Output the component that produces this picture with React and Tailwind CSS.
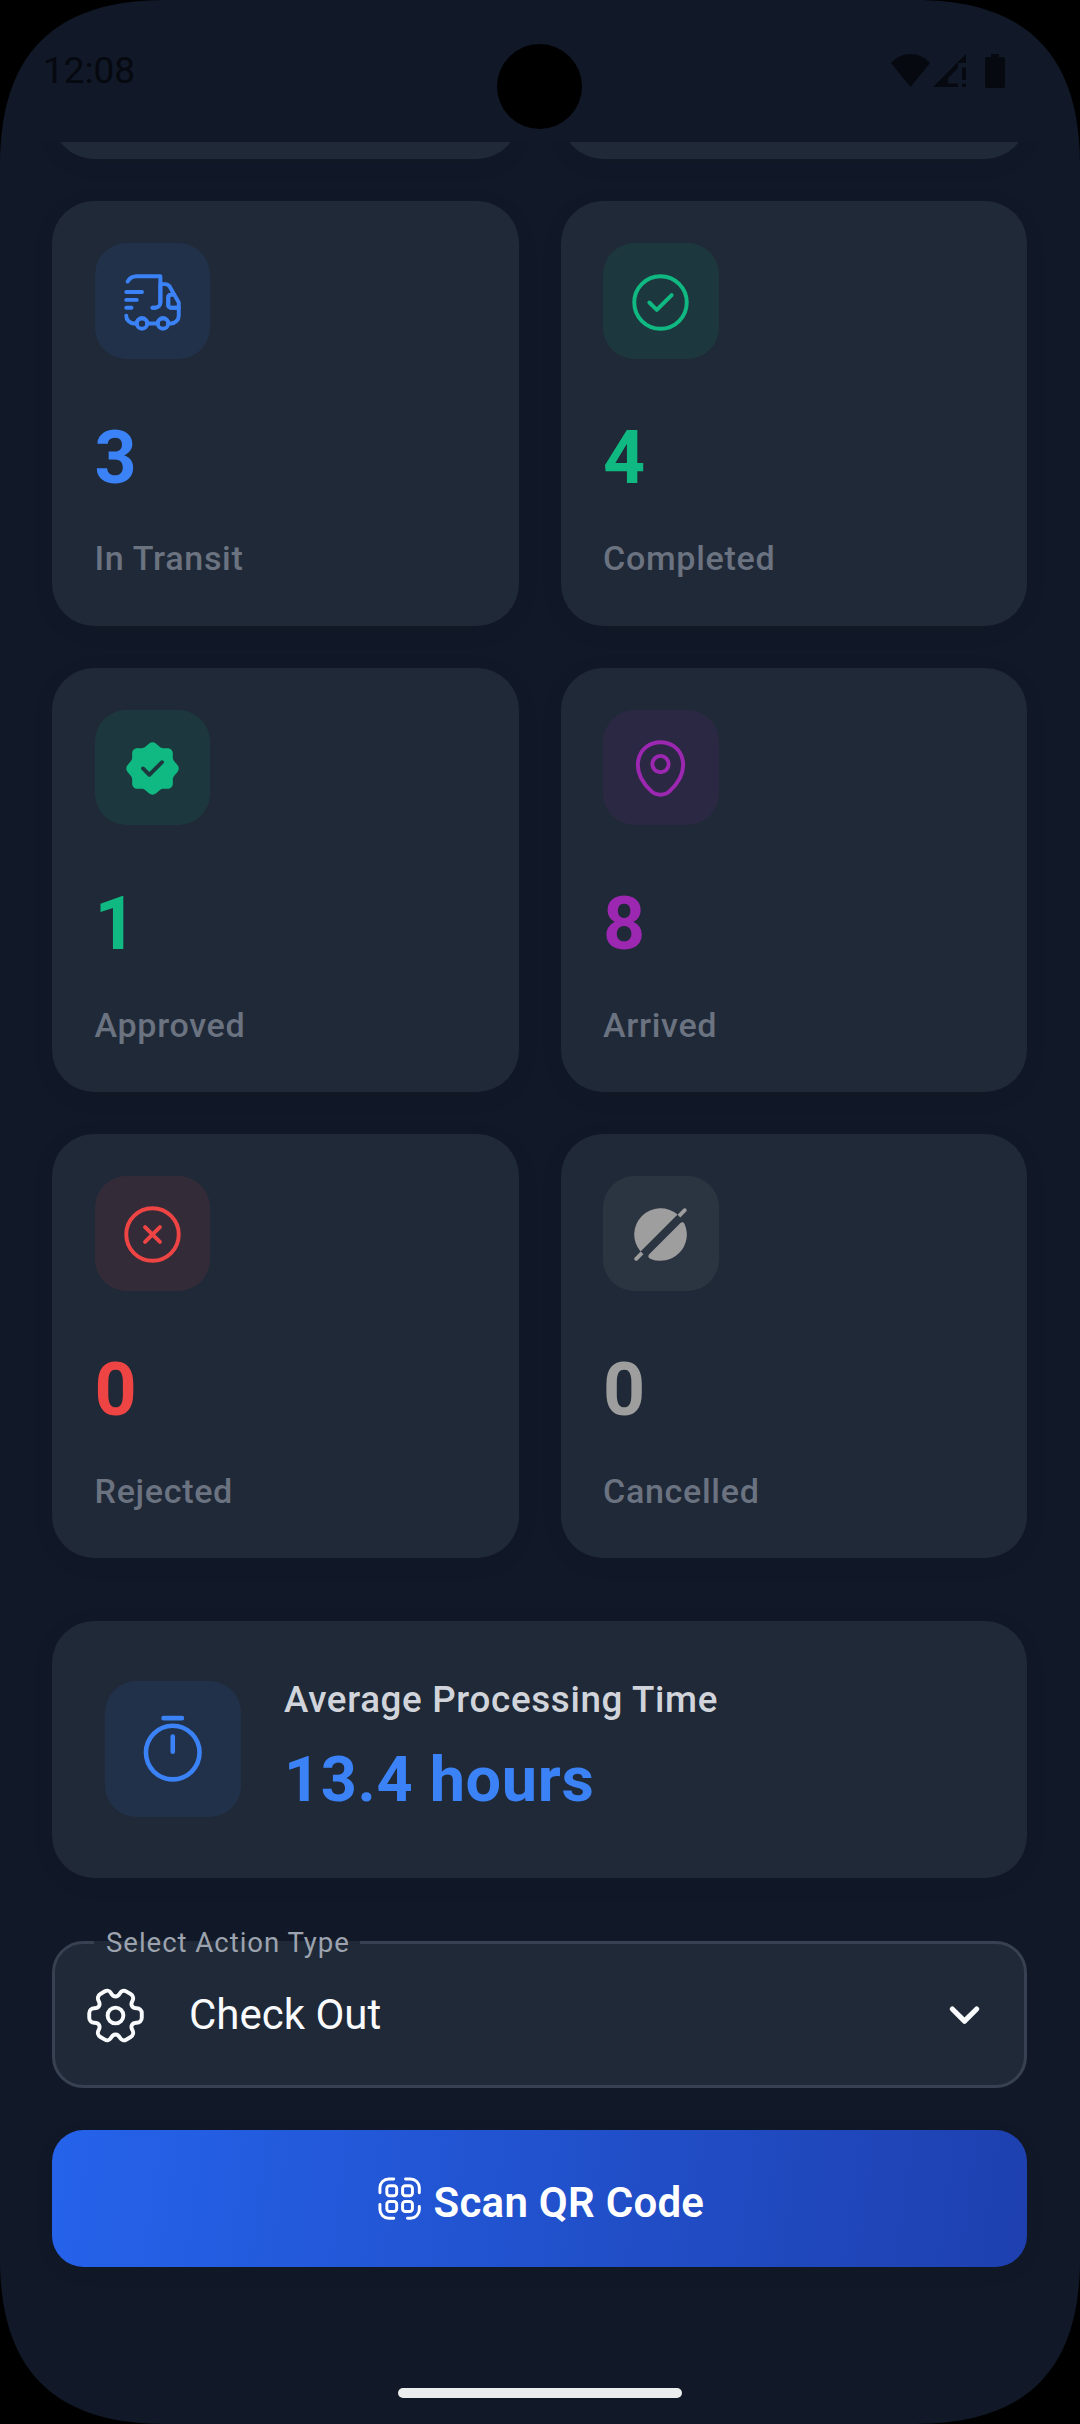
const stroke = {
  fill: "none",
  stroke: "currentColor",
  strokeWidth: 1.5,
  strokeLinecap: "round",
  strokeLinejoin: "round",
};

function Icon({ className, children }) {
  return (
    <svg viewBox="0 0 24 24" className={className} {...stroke}>
      {children}
    </svg>
  );
}

const TruckFast = () => (
  <>
    <path d="M12 14h1c1.1 0 2-.9 2-2V2H6c-1.5 0-2.81.83-3.49 2.05" />
    <path d="M2 17c0 1.66 1.34 3 3 3h1c0-1.1.9-2 2-2s2 .9 2 2h4c0-1.1.9-2 2-2s2 .9 2 2h1c1.66 0 3-1.34 3-3v-3h-3c-.55 0-1-.45-1-1v-3c0-.55.45-1 1-1h1.29l-1.71-2.99A2.016 2.016 0 0 0 16.84 5H15v7c0 1.1-.9 2-2 2h-1" />
    <circle cx="8" cy="20" r="2" />
    <circle cx="16" cy="20" r="2" />
    <path d="M22 12v2h-3c-.55 0-1-.45-1-1v-3c0-.55.45-1 1-1h1.29L22 12zM2 8h6M2 11h4M2 14h2" />
  </>
);

const TickCircle = () => (
  <>
    <circle cx="12" cy="12" r="10" />
    <path d="M7.75 12l2.83 2.83 5.67-5.66" />
  </>
);

const CloseCircle = () => (
  <>
    <circle cx="12" cy="12" r="10" />
    <path d="M9.17 14.83l5.66-5.66M14.83 14.83L9.17 9.17" />
  </>
);

const Verify = () => (
  <path
    stroke="none"
    fill="currentColor"
    d="M21.5609 10.7386L20.2009 9.15859C19.9409 8.85859 19.7309 8.29859 19.7309 7.89859V6.19859C19.7309 5.13859 18.8609 4.26859 17.8009 4.26859H16.1009C15.7109 4.26859 15.1409 4.05859 14.8409 3.79859L13.2609 2.43859C12.5709 1.84859 11.4409 1.84859 10.7409 2.43859L9.17086 3.80859C8.87086 4.05859 8.30086 4.26859 7.91086 4.26859H6.18086C5.12086 4.26859 4.25086 5.13859 4.25086 6.19859V7.90859C4.25086 8.29859 4.04086 8.85859 3.79086 9.15859L2.44086 10.7486C1.86086 11.4386 1.86086 12.5586 2.44086 13.2486L3.79086 14.8386C4.04086 15.1386 4.25086 15.6986 4.25086 16.0886V17.7986C4.25086 18.8586 5.12086 19.7286 6.18086 19.7286H7.91086C8.30086 19.7286 8.87086 19.9386 9.17086 20.1986L10.7509 21.5586C11.4409 22.1486 12.5709 22.1486 13.2709 21.5586L14.8509 20.1986C15.1509 19.9386 15.7109 19.7286 16.1109 19.7286H17.8109C18.8709 19.7286 19.7409 18.8586 19.7409 17.7986V16.0986C19.7409 15.7086 19.9509 15.1386 20.2109 14.8386L21.5709 13.2586C22.1509 12.5686 22.1509 11.4286 21.5609 10.7386ZM16.1609 10.1086L11.3309 14.9386C11.1909 15.0786 11.0009 15.1586 10.8009 15.1586C10.6009 15.1586 10.4109 15.0786 10.2709 14.9386L7.85086 12.5186C7.56086 12.2286 7.56086 11.7486 7.85086 11.4586C8.14086 11.1686 8.62086 11.1686 8.91086 11.4586L10.8009 13.3486L15.1009 9.04859C15.3909 8.75859 15.8709 8.75859 16.1609 9.04859C16.4509 9.33859 16.4509 9.81859 16.1609 10.1086Z"
  />
);

const Location = () => (
  <>
    <circle cx="12" cy="10.31" r="3.12" />
    <path d="M3.62 8.49c1.97-8.66 14.8-8.65 16.76.01 1.15 5.08-2.01 9.38-4.78 12.04a5.193 5.193 0 0 1-7.21 0c-2.76-2.66-5.92-6.97-4.77-12.05z" />
  </>
);

const Slash = () => (
  <g stroke="none" fill="currentColor">
    <path d="M18.5 4.4A10 10 0 0 0 4.4 18.5Z" />
    <path d="M19.5 7.7C20 7.2 20.9 7.2 21.2 8.05A10 10 0 0 1 8.05 21.2C7.2 20.9 7.2 20 7.7 19.5Z" />
    <path d="M21.78 3.28L19.55 5.5L18.5 4.45L20.72 2.22C21.4 1.55 22.45 2.6 21.78 3.28Z" />
    <path d="M5.5 19.55L3.28 21.78C2.6 22.45 1.55 21.4 2.22 20.72L4.45 18.5Z" />
  </g>
);

const Timer = () => (
  <path d="M20.75 13.25c0 4.83-3.92 8.75-8.75 8.75s-8.75-3.92-8.75-8.75S7.17 4.5 12 4.5s8.75 3.92 8.75 8.75zM12 8v5M9 2h6" />
);

const Setting = () => (
  <>
    <circle cx="12" cy="12" r="3" />
    <path d="M2 12.88v-1.76c0-1.04.85-1.9 1.9-1.9 1.81 0 2.55-1.28 1.64-2.85-.52-.9-.21-2.07.7-2.59l1.73-.99c.79-.47 1.81-.19 2.28.6l.11.19c.9 1.57 2.38 1.57 3.29 0l.11-.19c.47-.79 1.49-1.07 2.28-.6l1.73.99c.91.52 1.22 1.69.7 2.59-.91 1.57-.17 2.85 1.64 2.85 1.04 0 1.9.85 1.9 1.9v1.76c0 1.04-.85 1.9-1.9 1.9-1.81 0-2.55 1.28-1.64 2.85.52.91.21 2.07-.7 2.59l-1.73.99c-.79.47-1.81.19-2.28-.6l-.11-.19c-.9-1.57-2.38-1.57-3.29 0l-.11.19c-.47.79-1.49 1.07-2.28.6l-1.73-.99a1.899 1.899 0 0 1-.7-2.59c.91-1.57.17-2.85-1.64-2.85-1.05 0-1.9-.86-1.9-1.9z" />
  </>
);

const ScanCode = () => (
  <>
    <path d="M2 9V6.5C2 4.01 4.01 2 6.5 2H9M15 2h2.5C19.99 2 22 4.01 22 6.5V9M22 16v1.5c0 2.49-2.01 4.5-4.5 4.5H16M9 22H6.5C4.01 22 2 19.99 2 17.5V15" />
    <rect x="5.5" y="5.5" width="5" height="5" rx="1.4" />
    <rect x="13.5" y="5.5" width="5" height="5" rx="1.4" />
    <rect x="5.5" y="13.5" width="5" height="5" rx="1.4" />
    <rect x="13.5" y="13.5" width="5" height="5" rx="1.4" />
  </>
);

const stats = [
  { label: "In Transit", value: 3, icon: TruckFast, color: "text-[#3b82f6]", tint: "bg-[#3b82f6]/10" },
  { label: "Completed", value: 4, icon: TickCircle, color: "text-[#10b981]", tint: "bg-[#10b981]/10" },
  { label: "Approved", value: 1, icon: Verify, color: "text-[#10b981]", tint: "bg-[#10b981]/10" },
  { label: "Arrived", value: 8, icon: Location, color: "text-[#9c27b0]", tint: "bg-[#9c27b0]/10" },
  { label: "Rejected", value: 0, icon: CloseCircle, color: "text-[#ef4444]", tint: "bg-[#ef4444]/10" },
  { label: "Cancelled", value: 0, icon: Slash, color: "text-[#9e9e9e]", tint: "bg-[#9e9e9e]/10" },
];

function StatCard({ label, value, icon: Glyph, color, tint }) {
  return (
    <div className="h-[424.3px] rounded-[42px] bg-[#1f2937] px-[42.5px] pt-[42px] shadow-[0_5px_26px_rgba(0,0,0,0.05)]">
      <div className={`flex size-[115.5px] items-center justify-center rounded-[31.5px] ${tint} ${color}`}>
        <Icon className="mt-[2px] size-[63px]">
          <Glyph />
        </Icon>
      </div>
      <div className={`mt-[55px] text-[73.5px] leading-[88px] font-bold ${color}`}>{value}</div>
      <div className="mt-[36.7px] text-[34.125px] leading-[40px] font-medium tracking-[0.66px] text-[#6b7280]">{label}</div>
    </div>
  );
}

function StatusBar() {
  return (
    <header className="relative flex h-[142px] shrink-0 items-start justify-between pr-[75px] pl-[43px] text-[#06090f]">
      <span className="mt-[49px] text-[37px] leading-[44px]">12:08</span>
      <div className="absolute top-[44px] left-[497px] size-[85px] rounded-full bg-black" />
      <div className="mt-[54px] flex">
        <svg width="39" height="33" viewBox="0 0 39 33" fill="currentColor">
          <path d="M0 9C11-3 28-3 39 9L19.5 33Z" />
        </svg>
        <svg className="ml-[3px]" width="33" height="33" viewBox="0 0 33 33" fill="currentColor">
          <path d="M33 0V9H24ZM25 9V14L15 24V29.5H25V33H0L24 9ZM29 13.5H33V26H29ZM29 29.5H33V33H29Z" />
        </svg>
        <svg className="ml-[19px]" width="20" height="34" viewBox="0 0 20 34" fill="currentColor">
          <path d="M6 0H14V3H18Q20 3 20 5V32Q20 34 18 34H2Q0 34 0 32V5Q0 3 2 3H6Z" />
        </svg>
      </div>
    </header>
  );
}

export default function App() {
  return (
    <div className="h-[2424px] w-[1080px] overflow-hidden bg-black font-[Roboto,sans-serif]">
      <div className="flex h-full flex-col overflow-hidden bg-[#111827] [clip-path:path('M0_165C0_54_54_0_165_0H915C1026_0_1080_54_1080_165V2259C1080_2370_1026_2424_915_2424H165C54_2424_0_2370_0_2259Z')]">
        <StatusBar />
        <main className="flex flex-1 flex-col overflow-hidden pr-[53px] pl-[52px]">
          <div className="grid shrink-0 grid-cols-2 gap-[42px]">
            <div className="-mt-[43px] h-[60.3px] rounded-b-[42px] bg-[#1f2937] shadow-[0_5px_26px_rgba(0,0,0,0.05)]" />
            <div className="-mt-[43px] h-[60.3px] rounded-b-[42px] bg-[#1f2937] shadow-[0_5px_26px_rgba(0,0,0,0.05)]" />
            {stats.map((s) => (
              <StatCard key={s.label} {...s} />
            ))}
          </div>

          <section className="mt-[62.5px] flex h-[257px] shrink-0 items-center rounded-[42px] bg-[#1f2937] px-[52.5px] shadow-[0_5px_26px_rgba(0,0,0,0.05)]">
            <div className="flex size-[136.5px] items-center justify-center rounded-[31.5px] bg-[#3b82f6]/10 text-[#3b82f6]">
              <Icon className="size-[73.5px]">
                <Timer />
              </Icon>
            </div>
            <div className="ml-[43px] pb-[2.5px]">
              <div className="text-[36.75px] leading-[43px] font-medium tracking-[0.66px] text-[#d1d5db]">Average Processing Time</div>
              <div className="mt-[21px] text-[63px] leading-[75px] font-bold tracking-[0.66px] text-[#3b82f6]">13.4 hours</div>
            </div>
          </section>

          <div className="relative mt-[63px] h-[147px] shrink-0 rounded-[31.5px] border-3 border-[#374151] bg-[#1f2937]">
            <span className="absolute -top-[3px] left-[39px] flex h-[4px] w-[266px] items-center bg-[#1f2937] pl-[12px] text-[27.56px] tracking-[0.97px] whitespace-nowrap text-[#9ca3af]">
              Select Action Type
            </span>
            <div className="flex h-full items-center pr-[28px] pl-[29px] text-[#f9fafb]">
              <Icon className="mt-[2px] size-[63px]">
                <Setting />
              </Icon>
              <span className="ml-[42px] flex-1 pt-[2px] text-[42px] leading-[50px]">Check Out</span>
              <svg className="mt-[2px]" width="63" height="63" viewBox="0 0 63 63" fill="none" stroke="currentColor" strokeWidth="5.2" strokeLinecap="round" strokeLinejoin="round">
                <path d="M19.3 25L31.5 37.2L43.7 25" />
              </svg>
            </div>
          </div>

          <button className="mt-[42px] flex h-[137px] shrink-0 items-center justify-center rounded-[31.5px] bg-[linear-gradient(98deg,#2563eb,#1e40af)] pl-[1px] text-white shadow-[0_5px_20px_rgba(0,0,0,0.06)]">
            <Icon className="mt-[1px] size-[47.25px]">
              <ScanCode />
            </Icon>
            <span className="ml-[10.5px] pt-[9px] text-[42px] leading-[50px] font-semibold tracking-[0.26px]">Scan QR Code</span>
          </button>
        </main>
        <footer className="flex h-[36px] shrink-0 justify-center">
          <div className="h-[10px] w-[284px] rounded-full bg-[#ebedef]" />
        </footer>
      </div>
    </div>
  );
}
